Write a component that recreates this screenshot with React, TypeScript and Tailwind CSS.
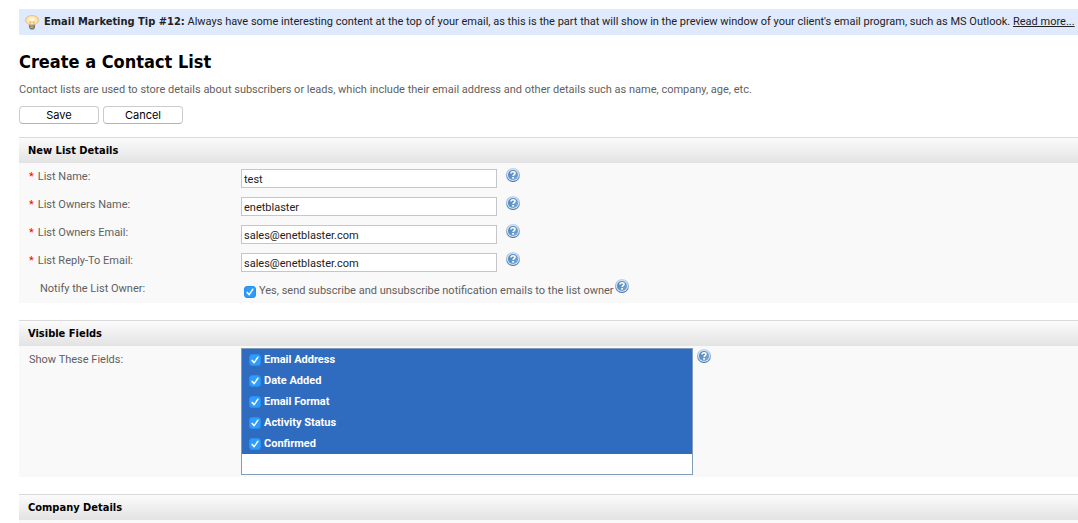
import { useState, type ReactNode } from "react";

function BulbIcon() {
  return (
    <svg className="h-4 w-4 shrink-0" viewBox="0 0 16 16" aria-hidden="true">
      <defs>
        <radialGradient id="bulb-glass" cx="50%" cy="45%" r="58%">
          <stop offset="0" stopColor="#fffef6" />
          <stop offset="0.5" stopColor="#ffeeb8" />
          <stop offset="1" stopColor="#f6b870" />
        </radialGradient>
      </defs>
      <path
        d="M8 1.500C4 1.500 1.300 3.400 1.300 6.100c0 2.300 2.200 3.200 3.300 4.300.5.5.6 1.100.6 1.600h5.600c0-.5.1-1.100.6-1.600 1.100-1.100 3.300-2 3.300-4.300C14.700 3.400 12 1.500 8 1.500z"
        fill="url(#bulb-glass)"
        stroke="#e3bd98"
        strokeWidth="0.8"
      />
      <path d="M6.200 10.500V8L5 6.800M9.800 10.500V8L11 6.800M6.200 8h3.600" fill="none" stroke="#f5ac55" strokeWidth="0.9" />
      <path d="M5 10.800h6v3L9.700 15.600H6.600L5 13.800z" fill="#77776f" />
      <path d="M5.800 11.800h4M6 13.400h3.500" stroke="#d5d3c0" strokeWidth="0.7" />
    </svg>
  );
}

function HelpIcon() {
  return (
    <svg className="block h-[14px] w-[14px]" viewBox="0 0 14 14" aria-hidden="true">
      <defs>
        <linearGradient id="help-rim" x1="0" y1="0" x2="0" y2="1">
          <stop offset="0" stopColor="#c3d6ec" />
          <stop offset="0.5" stopColor="#8fb0d6" />
          <stop offset="1" stopColor="#3f6c9f" />
        </linearGradient>
        <linearGradient id="help-face" x1="0" y1="0" x2="1" y2="1">
          <stop offset="0" stopColor="#4a80b8" />
          <stop offset="1" stopColor="#79abd6" />
        </linearGradient>
      </defs>
      <circle cx="7" cy="7" r="7" fill="url(#help-rim)" />
      <circle cx="7" cy="7" r="6" fill="#d5e4f3" />
      <circle cx="7" cy="7" r="5" fill="url(#help-face)" />
      <path d="M5 5.600C5 4.200 6 3.700 7 3.700s2 .5 2 1.600C9 6.600 7.100 6.500 7.100 8" fill="none" stroke="#fff" strokeWidth="1.600" />
      <rect x="6.200" y="9" width="1.800" height="1.600" fill="#fff" />
    </svg>
  );
}

function Help({ about }: { about: string }) {
  return (
    <button type="button" aria-label={"Help: " + about} className="shrink-0">
      <HelpIcon />
    </button>
  );
}

function Tick({ id, defaultChecked }: { id: string; defaultChecked?: boolean }) {
  return (
    <span className="mt-px grid h-3 w-3 shrink-0">
      <input
        id={id}
        type="checkbox"
        defaultChecked={defaultChecked}
        className="peer col-start-1 row-start-1 h-3 w-3 appearance-none rounded-[3px] border border-[#b5b5b5] bg-white checked:border-[#2490f5] checked:bg-[#2f9bfa]"
      />
      <svg
        viewBox="0 0 12 12"
        className="pointer-events-none invisible col-start-1 row-start-1 h-3 w-3 peer-checked:visible"
        aria-hidden="true"
      >
        <path d="M3.200 6.400l2 2.300 3.700-5.500" fill="none" stroke="#fff" strokeWidth="1.500" strokeLinecap="round" strokeLinejoin="round" />
      </svg>
    </span>
  );
}

function Section({ title, children }: { title: string; children?: ReactNode }) {
  return (
    <section className="mb-[17px]">
      <h2 className="h-[26px] border-t border-[#dadada] bg-linear-to-b from-[#fbfbfb] to-[#e3e3e3] pl-[9px] font-['DejaVu_Sans_Condensed','DejaVu_Sans',sans-serif] font-bold leading-[26px] text-black">
        {title}
      </h2>
      <div className="bg-[#f9f9f9]">{children}</div>
    </section>
  );
}

function TextRow({ id, label, initial }: { id: string; label: string; initial: string }) {
  const [value, setValue] = useState(initial);
  return (
    <div className="flex h-7 items-start pt-[5px]">
      <label htmlFor={id} className="w-[222px] shrink-0 pt-px pl-[10px]">
        <span className="mr-1 text-[#ff0000]">*</span>
        {label}
      </label>
      <input
        id={id}
        type="text"
        value={value}
        onChange={(e) => setValue(e.target.value)}
        className="mt-px mr-[9px] h-[19px] w-64 border border-[#c6c6c6] bg-white px-[2px] pt-px text-[#222]"
      />
      <Help about={label} />
    </div>
  );
}

const details = [
  { id: "name", label: "List Name:", initial: "test" },
  { id: "owner", label: "List Owners Name:", initial: "enetblaster" },
  { id: "email", label: "List Owners Email:", initial: "sales@enetblaster.com" },
  { id: "reply", label: "List Reply-To Email:", initial: "sales@enetblaster.com" },
];

const fields = ["Email Address", "Date Added", "Email Format", "Activity Status", "Confirmed"];

const buttonClass =
  "h-[18px] w-20 rounded-[4px] border border-[#cbcbcb] border-b-[#b3b3b3] bg-white font-[Inter,sans-serif] text-[11px] leading-4 text-black";

export default function App() {
  return (
    <main className="overflow-x-hidden bg-white pt-[9px] pl-[19px] font-[Roboto,sans-serif] text-[11px] leading-4 text-[#5f5f5f]">
      <div className="flex h-[26px] items-center gap-1 bg-[#dfeafe] pl-[5px] whitespace-nowrap text-[#222]">
        <BulbIcon />
        <p>
          <strong className="font-['DejaVu_Sans_Condensed','DejaVu_Sans',sans-serif]">Email Marketing Tip #12:</strong>{" "}
          Always have some interesting content at the top of your email, as this is the part that will show in the preview
          window of your client's email program, such as MS Outlook.{" "}
          <a href="#tip" className="underline">
            Read more...
          </a>
        </p>
      </div>
      <h1 className="mt-[15px] font-['DejaVu_Sans_Condensed','DejaVu_Sans',sans-serif] text-[18px] leading-6 font-bold text-black">
        Create a Contact List
      </h1>
      <p className="mt-2">
        Contact lists are used to store details about subscribers or leads, which include their email address and other
        details such as name, company, age, etc.
      </p>
      <form onSubmit={(e) => e.preventDefault()}>
        <div className="mt-2 mb-[13px] flex gap-1">
          <button type="submit" className={buttonClass}>
            Save
          </button>
          <button type="button" className={buttonClass}>
            Cancel
          </button>
        </div>
        <Section title="New List Details">
          {details.map((d) => (
            <TextRow key={d.id} {...d} />
          ))}
          <div className="flex h-7 items-start pt-1">
            <span className="w-[222px] shrink-0 pt-[2px] pl-[21px]">Notify the List Owner:</span>
            <div className="flex items-start gap-px pl-[3px]">
              <div className="flex items-center gap-[3px] pt-1">
                <Tick id="notify" defaultChecked />
                <label htmlFor="notify">Yes, send subscribe and unsubscribe notification emails to the list owner</label>
              </div>
              <Help about="Notify the List Owner" />
            </div>
          </div>
        </Section>
        <Section title="Visible Fields">
          <div className="flex items-start pt-[2px] pb-[2px]">
            <span className="w-[222px] shrink-0 pt-1 pl-[10px]">Show These Fields:</span>
            <ul className="mr-1 h-[127px] w-[452px] border border-[#7f9db9] bg-white font-bold text-white">
              {fields.map((name, i) => (
                <li key={name} className="flex h-[21px] items-center gap-[3px] bg-[#2f6cc0] pl-[7px]">
                  <Tick id={"field-" + i} defaultChecked />
                  <label htmlFor={"field-" + i}>{name}</label>
                </li>
              ))}
            </ul>
            <div className="pt-px">
              <Help about="Show These Fields" />
            </div>
          </div>
        </Section>
        <Section title="Company Details">
          <div className="h-1" />
        </Section>
      </form>
    </main>
  );
}
